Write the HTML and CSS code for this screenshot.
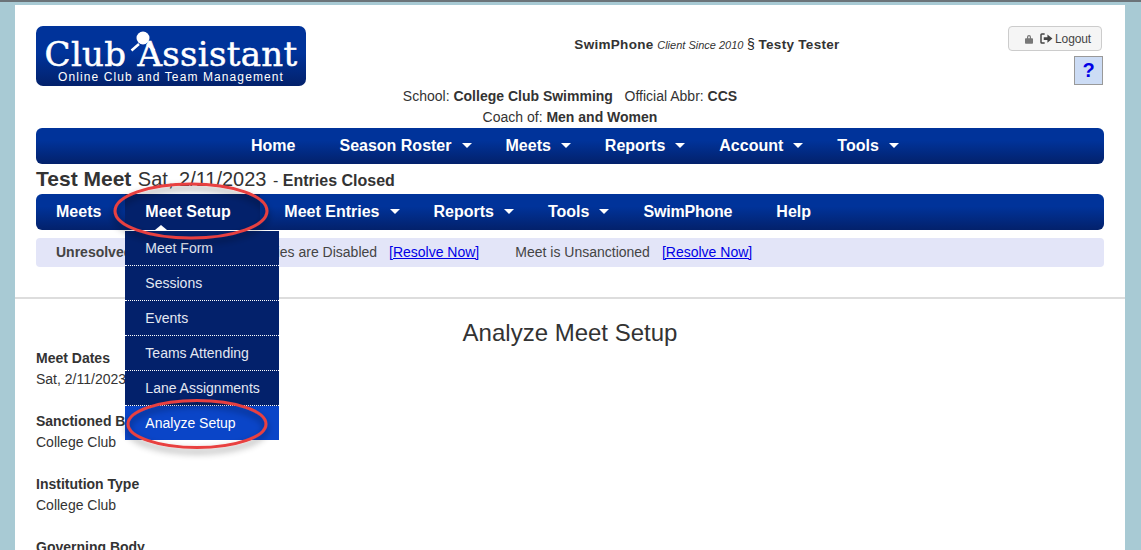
FILE: index.html
```html
<!DOCTYPE html>
<html lang="en">
<head>
    <meta charset="UTF-8">
    <title>Analyze Meet Setup</title>
    <link rel="stylesheet" href="styles.css">
</head>
<body>
    <div class="page">
        <!-- Header -->
        <header class="top">
            <div class="logo">
                <svg class="logo-figure" viewBox="0 0 26 22" width="26" height="22">
                    <circle cx="13" cy="7" r="6.500" fill="#fff"/>
                    <path d="M9 13 L1.500 19.500 M17 13 L24.500 19.500" stroke="#fff" stroke-width="2.500" fill="none"/>
                </svg>
                <div class="logo-name">Club Assistant</div>
                <div class="logo-sub">Online Club and Team Management</div>
            </div>
            <div class="client">
                <b>SwimPhone</b> <i>Client Since 2010</i> <span class="sect">§</span> <b>Testy Tester</b>
            </div>
            <div class="top-buttons">
                <a class="logout">
                    <svg viewBox="0 0 10 12" width="8" height="10"><path d="M1 5h8a1 1 0 0 1 1 1v5a1 1 0 0 1-1 1H1a1 1 0 0 1-1-1V6a1 1 0 0 1 1-1zM2.500 5V3.500a2.500 2.500 0 0 1 5 0V5H6V3.500a1 1 0 0 0-2 0V5z" fill="#777"/></svg>
                    <svg class="logout-arrow" viewBox="0 0 14 12" width="13" height="11"><path d="M5 1H2a1 1 0 0 0-1 1v8a1 1 0 0 0 1 1h3" fill="none" stroke="#444" stroke-width="1.600"/><path d="M4 4.500h4V1.500l5.500 4.500L8 10.500V7.500H4z" fill="#444"/></svg>
                    Logout
                </a>
                <a class="help">?</a>
            </div>
        </header>

        <div class="school">
            <p>School: <b>College Club Swimming</b> &nbsp; Official Abbr: <b>CCS</b></p>
            <p>Coach of: <b>Men and Women</b></p>
        </div>

        <nav class="nav nav-main">
            <a>Home</a>
            <a class="caret">Season Roster</a>
            <a class="caret">Meets</a>
            <a class="caret">Reports</a>
            <a class="caret">Account</a>
            <a class="caret">Tools</a>
        </nav>

        <h1 class="meet-title"><b>Test Meet</b> Sat, 2/11/2023 <small>- <b>Entries Closed</b></small></h1>

        <nav class="nav nav-meet">
            <a>Meets</a>
            <div class="has-menu">
                <a class="open">Meet Setup</a>
                <ul class="menu">
                    <li>Meet Form</li>
                    <li>Sessions</li>
                    <li>Events</li>
                    <li>Teams Attending</li>
                    <li>Lane Assignments</li>
                    <li class="active">Analyze Setup</li>
                </ul>
            </div>
            <a class="caret">Meet Entries</a>
            <a class="caret">Reports</a>
            <a class="caret">Tools</a>
            <a class="swim">SwimPhone</a>
            <a>Help</a>
        </nav>

        <div class="alert">
            <b>Unresolved Issues:</b>
            <span class="alert-one">Entries are Disabled</span>
            <a href="#">[Resolve Now]</a>
            <span class="alert-two">Meet is Unsanctioned</span>
            <a href="#">[Resolve Now]</a>
        </div>

        <hr class="rule">

        <h2 class="page-title">Analyze Meet Setup</h2>

        <dl class="facts">
            <dt>Meet Dates</dt>
            <dd>Sat, 2/11/2023</dd>
            <dt>Sanctioned By</dt>
            <dd>College Club</dd>
            <dt>Institution Type</dt>
            <dd>College Club</dd>
            <dt>Governing Body</dt>
        </dl>
    </div>

    <!-- red circles drawn over the screenshot -->
    <svg class="marks" width="1141" height="550" viewBox="0 0 1141 550">
        <defs>
            <filter id="shadow" x="-20%" y="-40%" width="140%" height="200%">
                <feDropShadow dx="0" dy="4" stdDeviation="3.500" flood-color="#000" flood-opacity="0.45"/>
            </filter>
        </defs>
        <ellipse cx="191" cy="211" rx="76" ry="27" filter="url(#shadow)"/>
        <ellipse cx="197" cy="424" rx="69" ry="23.500" filter="url(#shadow)"/>
    </svg>
</body>
</html>
```

FILE: styles.css
```css
html, body {
    margin: 0;
    padding: 0;
    height: 550px;
    overflow: hidden;
}

body {
    font-family: "Liberation Sans", Arial, sans-serif;
    font-size: 14px;
    color: #333;
    background-color: #a8cad4;
    border-top: 2px solid #6b7378;
    box-sizing: border-box;
    position: relative;
}

a {
    color: inherit;
}

.page {
    width: 1068px;
    height: 524px;
    margin: 3px 0 0 15px;
    padding: 21px 21px 0;
    background-color: #fff;
    overflow: hidden;
}

/* Header */
.top {
    display: flex;
    height: 60px;
}

.logo {
    position: relative;
    flex: none;
    width: 270px;
    height: 60px;
    border-radius: 7px;
    background: linear-gradient(#00339a 0%, #00339a 45%, #03216b 100%);
    color: #fff;
    text-align: center;
    overflow: hidden;
}

.logo-figure {
    position: absolute;
    left: 94px;
    top: 5px;
}

.logo-name {
    font-family: "DejaVu Serif", serif;
    font-size: 34px;
    line-height: 36px;
    margin-top: 10px;
    letter-spacing: 0.300px;
    white-space: nowrap;
    -webkit-text-stroke: 0.500px #fff;
}

.logo-sub {
    font-size: 12px;
    line-height: 12px;
    margin-top: -1px;
    letter-spacing: 1.100px;
    white-space: nowrap;
}

.client {
    width: 530px;
    margin-left: 136px;
    padding-top: 10px;
    text-align: center;
    font-size: 13px;
    line-height: 16px;
    white-space: nowrap;
}

.client b {
    font-size: 13.500px;
    letter-spacing: 0.300px;
}

.client i {
    font-size: 11px;
}

.sect {
    font-size: 14px;
    color: #222;
}

.top-buttons {
    position: absolute;
    right: 37px;
    top: 24px;
    display: flex;
    flex-direction: column;
    align-items: flex-end;
}

.logout {
    display: flex;
    align-items: center;
    box-sizing: border-box;
    width: 94px;
    height: 25px;
    margin-right: 2px;
    padding-left: 16px;
    border: 1px solid #ccc;
    border-radius: 4px;
    background-color: #f5f5f5;
    font-size: 12px;
    letter-spacing: -0.100px;
    color: #444;
}

.logout-arrow {
    margin: 0 2px 0 7px;
}

.help {
    box-sizing: border-box;
    width: 29px;
    height: 29px;
    margin: 5px 1px 0 0;
    border: 1px solid #999;
    background-color: #ccdcf5;
    color: #0000e6;
    font-size: 20px;
    font-weight: bold;
    line-height: 27px;
    text-align: center;
}

.school {
    text-align: center;
}

.school p {
    margin: 0;
    height: 21px;
    line-height: 21px;
}

/* Nav bars */
.nav {
    display: flex;
    height: 36px;
    border-radius: 6px;
    background: linear-gradient(#00339a 0%, #00339a 35%, #03216b 100%);
    color: #fff;
    font-size: 16px;
    font-weight: bold;
    line-height: 35px;
}

.nav a {
    display: block;
    padding: 0 22px;
    white-space: nowrap;
}

.nav a.caret {
    padding-right: 12px;
}

.nav a.caret::after {
    content: "";
    display: inline-block;
    margin-left: 10px;
    vertical-align: 3px;
    border-top: 5px solid #fff;
    border-left: 5px solid transparent;
    border-right: 5px solid transparent;
}

.nav-main {
    padding-left: 193px;
}

.meet-title {
    margin: 0;
    height: 30px;
    line-height: 30px;
    font-size: 20px;
    font-weight: normal;
    white-space: nowrap;
}

.meet-title b {
    margin-right: 1px;
    font-size: 21px;
}

.meet-title small {
    margin-left: 1px;
    font-size: 16px;
}

.meet-title small b {
    font-size: 16px;
}

.nav-meet a {
    padding: 0 24px 0 20px;
}

.nav-meet a.caret {
    padding: 0 14px 0 20px;
}

.nav-meet a.swim {
    padding-right: 24px;
    letter-spacing: -0.200px;
}

.has-menu {
    position: relative;
}

.nav-meet a.open {
    position: relative;
    width: 91px;
    height: 36px;
    margin-right: 4px;
    padding: 0 24px 0 20px;
    background-color: #03216b;
}

.nav-meet a.open::after {
    content: "";
    position: absolute;
    left: 30px;
    bottom: 0;
    border-bottom: 5px solid #fff;
    border-left: 6px solid transparent;
    border-right: 6px solid transparent;
}

.menu {
    position: absolute;
    left: 0;
    top: 37px;
    z-index: 2;
    width: 154px;
    margin: 0;
    padding: 0;
    list-style: none;
    background-color: #03216b;
    font-size: 14px;
    font-weight: normal;
}

.menu li {
    box-sizing: border-box;
    height: 35px;
    padding-left: 20px;
    line-height: 34px;
    border-bottom: 1px dotted #fff;
    color: #e4e8f2;
}

.menu li.active {
    height: 34px;
    background-color: #0a45c8;
    border-bottom: none;
    color: #fff;
}

/* Alert row */
.alert {
    display: flex;
    box-sizing: border-box;
    height: 29px;
    margin-top: 8px;
    padding-left: 20px;
    border-radius: 4px;
    background-color: #e3e5f8;
    color: #444;
    line-height: 28px;
    white-space: nowrap;
}

.alert b {
    width: 195px;
}

.alert-one {
    width: 138px;
}

.alert a {
    color: #0000e6;
}

.alert-two {
    margin-left: 36px;
    margin-right: 12px;
}

.rule {
    width: 1110px;
    height: 2px;
    margin: 30px 0 0 -21px;
    border: 0;
    background-color: #ddd;
}

.page-title {
    margin: 21px 0 0;
    height: 26px;
    line-height: 26px;
    font-size: 24px;
    font-weight: normal;
    text-align: center;
}

.facts {
    margin: 2px 0 0;
    line-height: 21px;
}

.facts dt {
    font-weight: bold;
}

.facts dd {
    margin: 0 0 21px;
}

.marks {
    position: absolute;
    left: 0;
    top: -2px;
    z-index: 5;
    pointer-events: none;
}

.marks ellipse {
    fill: none;
    stroke: #e8403f;
    stroke-width: 3;
}
```
